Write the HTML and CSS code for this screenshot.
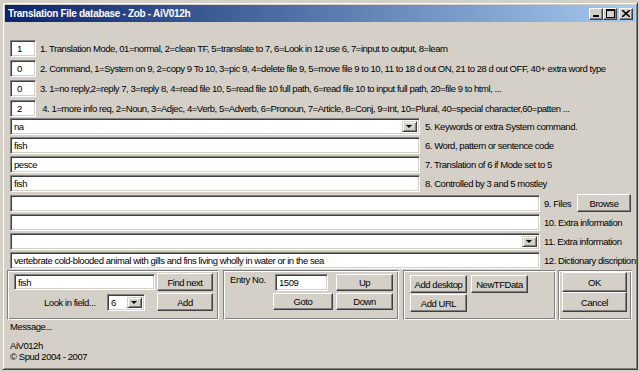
FILE: index.html
```html
<!DOCTYPE html>
<html lang="en">
<head>
    <meta charset="UTF-8">
    <title>Translation File database - Zob - AiV012h</title>
    <link rel="stylesheet" href="styles.css">
</head>
<body>

    <div class="window">
        <div class="titlebar">
            <span class="title">Translation File database - Zob - AiV012h</span>
            <div class="caption-buttons">
                <span class="cap-btn"><svg width="7" height="7" viewBox="0 0 7 7"><rect x="0" y="5" width="6" height="2" fill="#000"/></svg></span>
                <span class="cap-btn"><svg width="9" height="9" viewBox="0 0 9 9"><rect x="0.5" y="0.5" width="8" height="8" fill="none" stroke="#000"/><rect x="0" y="0" width="9" height="2" fill="#000"/></svg></span>
                <span class="cap-btn close"><svg width="8" height="7" viewBox="0 0 8 7"><path d="M0 0 L8 7 M8 0 L0 7" stroke="#000" stroke-width="1.6"/></svg></span>
            </div>
        </div>

        <div class="content">
            <!-- small number fields 1-4 -->
            <div class="codes">
                <div class="code-row"><div class="field small">1</div><span class="lbl">1. Translation Mode, 01=normal, 2=clean TF, 5=translate to 7, 6=Look in 12 use 6, 7=input to output, 8=learn</span></div>
                <div class="code-row"><div class="field small">0</div><span class="lbl">2. Command, 1=System on 9, 2=copy 9 To 10, 3=pic 9, 4=delete file 9, 5=move file 9 to 10, 11 to 18 d out ON, 21 to 28 d out OFF, 40+ extra word type</span></div>
                <div class="code-row"><div class="field small">0</div><span class="lbl">3. 1=no reply,2=reply 7, 3=reply 8, 4=read file 10, 5=read file 10 full path, 6=read file 10 to input full path, 20=file 9 to html, ...</span></div>
                <div class="code-row"><div class="field small">2</div><span class="lbl">&nbsp;4. 1=more info req, 2=Noun, 3=Adjec, 4=Verb, 5=Adverb, 6=Pronoun, 7=Article, 8=Conj, 9=Int, 10=Plural, 40=special character,60=patten ...</span></div>
            </div>

            <!-- fields 5-12 -->
            <div class="fields">
                <div class="f-row mid"><div class="field combo">na<span class="drop"></span></div><span class="lbl">5. Keywords or extra System command.</span></div>
                <div class="f-row mid"><div class="field">fish</div><span class="lbl">6. Word, pattern or sentence code</span></div>
                <div class="f-row mid"><div class="field">pesce</div><span class="lbl">7. Translation of 6 if Mode set to 5</span></div>
                <div class="f-row mid"><div class="field">fish</div><span class="lbl">8. Controlled by 3 and 5 mostley</span></div>
                <div class="f-row wide"><div class="field"></div><span class="lbl files">9. Files</span><button class="btn browse">Browse</button></div>
                <div class="f-row wide"><div class="field"></div><span class="lbl">10. Extra information</span></div>
                <div class="f-row wide"><div class="field combo"><span class="drop"></span></div><span class="lbl">11. Extra information</span></div>
                <div class="f-row wide"><div class="field">vertebrate cold-blooded animal with gills and fins living wholly in water or in the sea</div><span class="lbl">12. Dictionary discription</span></div>
            </div>

            <!-- bottom group boxes -->
            <div class="groups">
                <div class="group g-find">
                    <div class="field find">fish</div>
                    <button class="btn">Find next</button>
                    <span class="lbl look">Look in field...</span>
                    <div class="field combo look-combo">6<span class="drop"></span></div>
                    <button class="btn">Add</button>
                </div>
                <div class="group g-entry">
                    <span class="lbl entry">Entry No.</span>
                    <div class="field entry-no">1509</div>
                    <button class="btn">Up</button>
                    <button class="btn goto">Goto</button>
                    <button class="btn">Down</button>
                </div>
                <div class="group g-add">
                    <button class="btn">Add desktop</button>
                    <button class="btn">NewTFData</button>
                    <button class="btn">Add URL</button>
                </div>
                <div class="group g-ok">
                    <button class="btn">OK</button>
                    <button class="btn">Cancel</button>
                </div>
            </div>

            <div class="message">Message...</div>
            <div class="about">
                <div>AiV012h</div>
                <div>&copy; Spud 2004 - 2007</div>
            </div>
        </div>
    </div>

</body>
</html>
```

FILE: styles.css
```css
body {
    margin: 0;
    background: #d4d0c8;
    font-family: "Liberation Sans", Arial, sans-serif;
    font-size: 9.5px;
    letter-spacing: -0.45px;
    color: #000;
}
.window {
    margin: 2px 2px 0 2px;
    height: 368px;
    box-sizing: border-box;
    border: 1px solid;
    border-color: #d4d0c8 #404040 #404040 #d4d0c8;
    box-shadow: inset 1px 1px #fff, inset -1px -1px #808080;
    padding: 2px;
}
.titlebar {
    height: 17px;
    background: linear-gradient(to right, #0a246a, #a6caf0);
    display: flex;
    align-items: center;
    justify-content: space-between;
    padding: 0 2px 0 3px;
}
.title {
    color: #fff;
    font-weight: bold;
    font-size: 10px;
    letter-spacing: -0.3px;
}
.caption-buttons {
    display: flex;
}
.cap-btn {
    width: 14px;
    height: 12px;
    box-sizing: border-box;
    background: #d4d0c8;
    border: 1px solid;
    border-color: #fff #404040 #404040 #fff;
    box-shadow: inset -1px -1px #808080;
    display: flex;
    align-items: center;
    justify-content: center;
}
.cap-btn.close {
    margin-left: 2px;
}
.content {
    padding: 18px 0 0 5px;
}

/* sunken edit box */
.field {
    flex-shrink: 0;
    height: 17px;
    box-sizing: border-box;
    background: #fff;
    border: 1px solid;
    border-color: #808080 #fff #fff #808080;
    box-shadow: inset 1px 1px #404040, inset -1px -1px #d4d0c8;
    padding: 2px 3px;
    white-space: nowrap;
    overflow: hidden;
    position: relative;
    line-height: 12px;
}
.field.small {
    width: 26px;
    padding-left: 6px;
}
.combo .drop {
    position: absolute;
    right: 2px;
    top: 2px;
    width: 15px;
    height: 11px;
    box-sizing: border-box;
    background: #d4d0c8;
    border: 1px solid;
    border-color: #d4d0c8 #404040 #404040 #d4d0c8;
    box-shadow: inset 1px 1px #fff, inset -1px -1px #808080;
}
.combo .drop::after {
    content: "";
    position: absolute;
    left: 3px;
    top: 3px;
    border-left: 3px solid transparent;
    border-right: 3px solid transparent;
    border-top: 3px solid #000;
}

/* raised push button */
.btn {
    font: inherit;
    letter-spacing: inherit;
    white-space: nowrap;
    height: 18px;
    box-sizing: border-box;
    background: #d4d0c8;
    border: 1px solid;
    border-color: #fff #404040 #404040 #fff;
    box-shadow: inset -1px -1px #808080, inset 1px 1px #d4d0c8;
    padding: 0;
    color: #000;
}

.lbl {
    white-space: nowrap;
}

.codes {
    display: flex;
    flex-direction: column;
    gap: 3px;
}
.code-row {
    display: flex;
    align-items: center;
    gap: 4px;
}

.fields {
    margin-top: 1px;
    display: flex;
    flex-direction: column;
    gap: 2px;
}
.f-row {
    display: flex;
    align-items: center;
    gap: 5px;
}
.f-row.mid .field {
    width: 410px;
}
.f-row.wide .field {
    width: 530px;
}
.f-row.wide {
    gap: 4px;
}
.lbl.files {
    width: 29px;
}
.btn.browse {
    width: 54px;
}

.groups {
    margin: 1px 0 0 -3px;
    display: flex;
    gap: 4px;
}
.group {
    height: 50px;
    box-sizing: border-box;
    border: 1px solid;
    border-color: #808080 #fff #fff #808080;
    box-shadow: inset 1px 1px #fff, inset -1px -1px #808080;
    display: grid;
    align-items: center;
}
.g-find {
    width: 212px;
    grid-template-columns: 95px 44px 56px;
    grid-template-rows: 18px 18px;
    column-gap: 2px;
    row-gap: 2px;
    padding: 2px 0 0 6px;
    align-content: start;
}
.g-find .find {
    grid-column: 1 / 3;
    height: 16px;
}
.look {
    padding-left: 30px;
}
.look-combo {
    width: 38px;
    margin-left: -4px;
}
.g-entry {
    width: 176px;
    grid-template-columns: 42px 58px 57px;
    grid-template-rows: 17px 17px;
    column-gap: 3px;
    row-gap: 2px;
    padding: 3px 0 0 6px;
    align-content: start;
}
.entry {
    align-self: start;
    padding-top: 0;
}
.entry-no {
    width: 53px;
}
.g-entry .btn {
    height: 17px;
}
.g-entry .goto {
    grid-column: 2;
    margin-left: -2px;
}
.g-add {
    width: 153px;
    grid-template-columns: 57px 57px;
    grid-template-rows: 18px 18px;
    column-gap: 4px;
    row-gap: 1px;
    padding: 4px 0 0 6px;
    align-content: start;
}
.g-ok {
    margin-left: -2px;
    width: 74px;
    grid-template-columns: 65px;
    grid-template-rows: 20px 20px;
    padding: 1px 0 0 3px;
    align-content: start;
}
.g-ok .btn {
    height: 20px;
}

.message {
    margin-top: 0;
    height: 14px;
    line-height: 14px;
}
.about {
    margin-top: 6px;
    line-height: 11px;
}
```
